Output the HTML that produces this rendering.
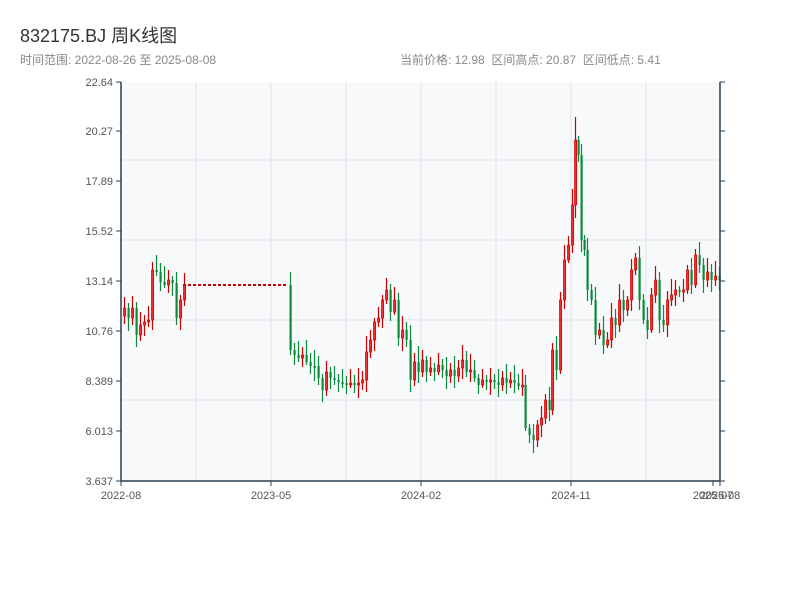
<!DOCTYPE html>
<html><head><meta charset="utf-8"><style>
body{margin:0;background:#fff;width:800px;height:600px;overflow:hidden;font-family:"Liberation Sans","Noto Sans CJK SC",sans-serif}
.t{position:absolute;left:20px;top:22px;font-size:18px;color:#333}
.s{position:absolute;top:51px;font-size:12px;color:#888}
</style></head><body>
<div class="t">832175.BJ 周K线图</div>
<div class="s" style="left:20px">时间范围: 2022-08-26 至 2025-08-08</div>
<div class="s" style="left:400px">当前价格: 12.98 &nbsp;区间高点: 20.87 &nbsp;区间低点: 5.41</div>
<svg id="c" width="800" height="600" style="position:absolute;left:0;top:0" font-family="Liberation Sans, sans-serif" font-size="11" fill="#555">
<rect x="121" y="82" width="599" height="399" fill="#f7f9fb"/>
<g stroke="#e2e5ea" stroke-width="1">
<line x1="196" y1="82" x2="196" y2="481"/><line x1="271" y1="82" x2="271" y2="481"/><line x1="346" y1="82" x2="346" y2="481"/><line x1="421" y1="82" x2="421" y2="481"/><line x1="496" y1="82" x2="496" y2="481"/><line x1="571" y1="82" x2="571" y2="481"/><line x1="646" y1="82" x2="646" y2="481"/>
<line x1="121" y1="160" x2="720" y2="160"/><line x1="121" y1="240" x2="720" y2="240"/><line x1="121" y1="320" x2="720" y2="320"/><line x1="121" y1="400" x2="720" y2="400"/>
</g>
<g id="k"></g>
<line x1="183" y1="285" x2="288" y2="285" stroke="#cc0000" stroke-width="2" stroke-dasharray="3,2"/>
<g stroke="#2c3e50" stroke-width="1.5" fill="none">
<line x1="121" y1="82" x2="121" y2="481"/><line x1="720" y1="82" x2="720" y2="481"/><line x1="121" y1="481" x2="720" y2="481"/>
</g>
<g stroke="#2c3e50" stroke-width="1">
<line x1="116" y1="82" x2="121" y2="82"/><line x1="116" y1="131" x2="121" y2="131"/><line x1="116" y1="181" x2="121" y2="181"/><line x1="116" y1="231" x2="121" y2="231"/><line x1="116" y1="281" x2="121" y2="281"/><line x1="116" y1="331" x2="121" y2="331"/><line x1="116" y1="381" x2="121" y2="381"/><line x1="116" y1="431" x2="121" y2="431"/><line x1="116" y1="481" x2="121" y2="481"/>
<line x1="720" y1="82" x2="725" y2="82"/><line x1="720" y1="131" x2="725" y2="131"/><line x1="720" y1="181" x2="725" y2="181"/><line x1="720" y1="231" x2="725" y2="231"/><line x1="720" y1="281" x2="725" y2="281"/><line x1="720" y1="331" x2="725" y2="331"/><line x1="720" y1="381" x2="725" y2="381"/><line x1="720" y1="431" x2="725" y2="431"/><line x1="720" y1="481" x2="725" y2="481"/>
<line x1="121" y1="481" x2="121" y2="486"/><line x1="271" y1="481" x2="271" y2="486"/><line x1="421" y1="481" x2="421" y2="486"/><line x1="571" y1="481" x2="571" y2="486"/><line x1="713" y1="481" x2="713" y2="486"/><line x1="720" y1="481" x2="720" y2="486"/>
</g>
<g text-anchor="end">
<text x="113" y="86">22.64</text><text x="113" y="135">20.27</text><text x="113" y="185">17.89</text><text x="113" y="235">15.52</text><text x="113" y="285">13.14</text><text x="113" y="335">10.76</text><text x="113" y="385">8.389</text><text x="113" y="435">6.013</text><text x="113" y="485">3.637</text>
</g>
<g text-anchor="middle">
<text x="121" y="499">2022-08</text><text x="271" y="499">2023-05</text><text x="421" y="499">2024-02</text><text x="571" y="499">2024-11</text><text x="713" y="499">2025-07</text><text x="720" y="499">2025-08</text>
</g>
</svg>
<script>
var pts=[[121,316],[124,308],[128,318],[132,308],[136,335],[140,325],[144,322],[148,320],[152,270],[156,272],[160,282],[164,285],[168,280],[172,283],[176,318],[180,300],[184,285],
[288,285],[290,350],[294,355],[298,358],[302,355],[306,362],[310,366],[314,366],[318,378],[322,390],[326,372],[330,378],[334,380],[338,382],[342,383],[346,385],[350,383],[354,384],[358,383],[362,380],[366,352],[370,340],[374,322],[378,318],[382,300],[386,290],[390,312],[394,300],[398,338],[402,330],[406,340],[410,380],[414,362],[418,372],[422,360],[426,372],[430,368],[434,372],[438,365],[442,370],[446,376],[450,370],[454,376],[458,368],[462,360],[466,372],[470,370],[474,378],[478,385],[482,380],[486,382],[490,380],[494,382],[498,385],[502,378],[506,383],[510,380],[514,383],[518,386],[522,385],[525,428],[529,435],[533,440],[537,425],[541,418],[545,400],[549,410],[552,350],[556,370],[560,300],[564,260],[568,245],[572,205],[575,140],[578,155],[581,240],[584,250],[587,290],[591,300],[595,335],[599,330],[603,345],[607,340],[611,318],[615,325],[619,300],[623,310],[627,300],[631,270],[635,258],[639,300],[643,320],[647,330],[651,295],[655,280],[659,320],[663,325],[667,300],[671,295],[675,290],[679,292],[683,290],[687,270],[691,285],[695,255],[699,265],[703,280],[707,272],[711,280],[715,276],[719,280]];
var s='';
for(var i=1;i<pts.length;i++){var x=pts[i][0],o=pts[i-1][1],c=pts[i][1];if(pts[i-1][0]==184&&x==288)continue;
var t=Math.min(o,c),b=Math.max(o,c);if(b-t<2){b=t+2;}
var h=t-(4+(i*7)%13),l=b+(3+(i*5)%11);if(x==575)h=117;var up=c<o;var col=up?'#cc0000':'#0a8a3a';
s+='<line x1="'+(x+0.5)+'" y1="'+h+'" x2="'+(x+0.5)+'" y2="'+l+'" stroke="'+col+'" stroke-width="1.2"/>';
s+='<rect x="'+(x-0.5)+'" y="'+t+'" width="2.2" height="'+(b-t)+'" fill="'+(up?'#f03030':col)+'" stroke="'+col+'" stroke-width="'+(up?0.7:0)+'"/>';}
document.getElementById('k').innerHTML=s;
</script>
</body></html>
